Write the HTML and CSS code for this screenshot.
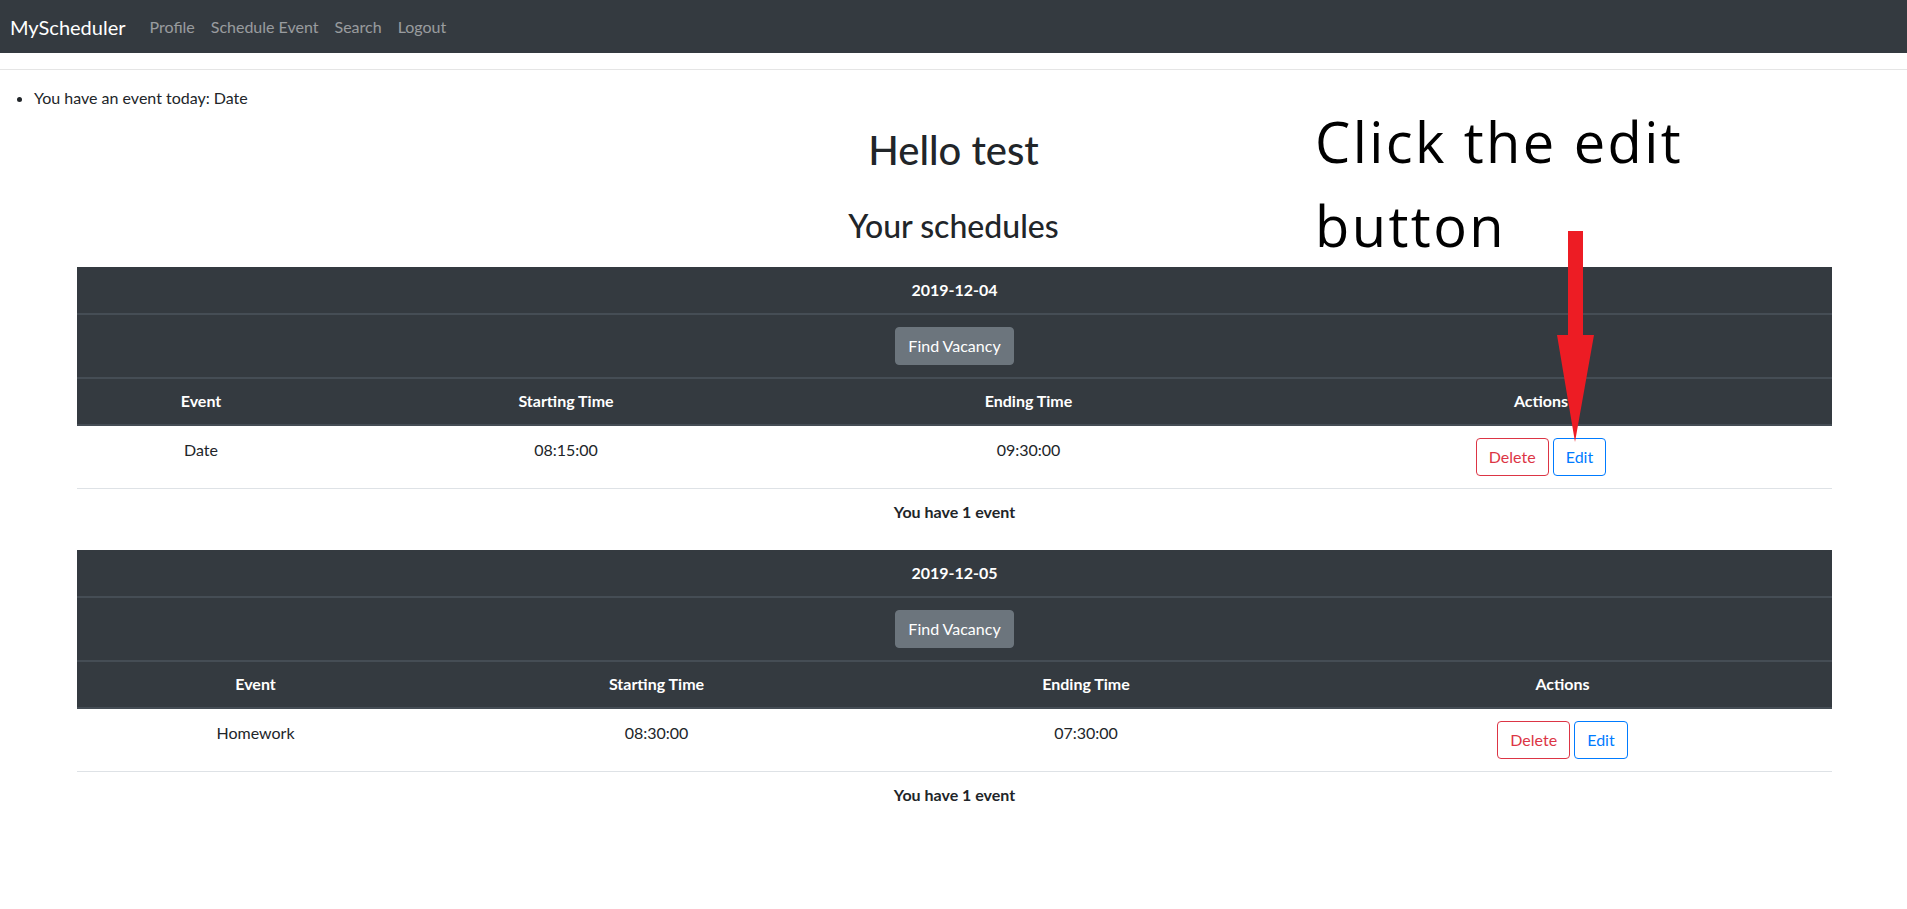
FILE: index.html
```html
<!DOCTYPE html>
<html>
<head>
<meta charset="utf-8">
<title>MyScheduler</title>
<link rel="stylesheet" href="styles.css">
</head>
<body>
<nav class="navbar">
  <a class="brand" href="#">MyScheduler</a>
  <a class="nav-link" href="#">Profile</a>
  <a class="nav-link" href="#">Schedule Event</a>
  <a class="nav-link" href="#">Search</a>
  <a class="nav-link" href="#">Logout</a>
</nav>
<hr class="rule">
<ul class="notices">
  <li>You have an event today: Date</li>
</ul>
<h1 class="hello">Hello test</h1>
<h2 class="subtitle">Your schedules</h2>

<table class="sched t1">
  <colgroup><col class="c1"><col class="c2"><col class="c3"><col class="c4"></colgroup>
  <thead>
    <tr><th colspan="4" class="date">2019-12-04</th></tr>
    <tr><th colspan="4" class="vac"><button class="btn btn-secondary">Find Vacancy</button></th></tr>
    <tr class="cols"><th>Event</th><th>Starting Time</th><th>Ending Time</th><th>Actions</th></tr>
  </thead>
  <tbody>
    <tr class="data"><td>Date</td><td>08:15:00</td><td>09:30:00</td><td><button class="btn btn-danger-o">Delete</button> <button class="btn btn-primary-o">Edit</button></td></tr>
    <tr class="count"><td colspan="4">You have 1 event</td></tr>
  </tbody>
</table>

<table class="sched t2">
  <colgroup><col class="c1"><col class="c2"><col class="c3"><col class="c4"></colgroup>
  <thead>
    <tr><th colspan="4" class="date">2019-12-05</th></tr>
    <tr><th colspan="4" class="vac"><button class="btn btn-secondary">Find Vacancy</button></th></tr>
    <tr class="cols"><th>Event</th><th>Starting Time</th><th>Ending Time</th><th>Actions</th></tr>
  </thead>
  <tbody>
    <tr class="data"><td>Homework</td><td>08:30:00</td><td>07:30:00</td><td><button class="btn btn-danger-o">Delete</button> <button class="btn btn-primary-o">Edit</button></td></tr>
    <tr class="count"><td colspan="4">You have 1 event</td></tr>
  </tbody>
</table>

<div class="annotation">Click the edit<br>button</div>
<svg class="arrow" width="40" height="215" viewBox="0 0 40 215">
  <polygon points="13,2 28,2 28,106 39,106 20,213 2,106 13,106" fill="#ed1c24"/>
</svg>
</body>
</html>
```

FILE: styles.css
```css
html, body {
  margin: 0;
  padding: 0;
}
body {
  font-family: Lato, "Open Sans", sans-serif;
  font-size: 16px;
  line-height: 24px;
  color: #212529;
  background: #fff;
  position: relative;
}
.navbar {
  display: flex;
  align-items: center;
  height: 53px;
  background: #343a40;
  padding: 0 0 0 10px;
}
.brand {
  color: #fff;
  font-size: 20px;
  line-height: 30px;
  text-decoration: none;
  margin-right: 16px;
}
.nav-link {
  color: rgba(255, 255, 255, 0.5);
  text-decoration: none;
  padding: 0 8px;
}
.rule {
  margin: 16px 0 16px 0;
  border: 0;
  border-top: 1px solid rgba(0, 0, 0, 0.1);
  height: 0;
}
.notices {
  margin: 0;
  padding-left: 34px;
}
.hello {
  text-align: center;
  font-size: 40px;
  font-weight: 500;
  line-height: 48px;
  margin: 16px 0 0 0;
}
.subtitle {
  text-align: center;
  font-size: 32px;
  font-weight: 500;
  line-height: 38px;
  margin: 33px 0 0 0;
}
.sched {
  border-collapse: collapse;
  table-layout: fixed;
  width: 1755px;
  margin: 0 0 15px 77px;
  text-align: center;
}
.t1 { margin-top: 22px; }
.t1 .c1 { width: 248px; }
.t1 .c2 { width: 482px; }
.t1 .c3 { width: 443px; }
.t1 .c4 { width: 582px; }
.t2 .c1 { width: 357px; }
.t2 .c2 { width: 445px; }
.t2 .c3 { width: 414px; }
.t2 .c4 { width: 539px; }
.sched th {
  background: #343a40;
  color: #fff;
  font-weight: 700;
  border-bottom: 2px solid #454d55;
  padding: 11px 12px;
}
.sched th.vac {
  padding: 12px 12px;
}
.sched .cols th {
  padding: 10px 12px 11px;
}
.sched td {
  vertical-align: top;
  padding: 12px 12px;
}
.sched .count td {
  border-top: 1px solid #dee2e6;
  padding: 11px 12px;
  font-weight: 700;
}
.data td {
  line-height: 24px;
}
.btn {
  font-family: inherit;
  font-size: 16px;
  line-height: 24px;
  padding: 6px 12px;
  border-radius: 4px;
  border: 1px solid transparent;
  background: transparent;
  cursor: pointer;
}
.btn-secondary {
  background: #6c757d;
  border-color: #6c757d;
  color: #fff;
}
.btn-danger-o {
  color: #dc3545;
  border-color: #dc3545;
}
.btn-primary-o {
  color: #007bff;
  border-color: #007bff;
}
.annotation {
  position: absolute;
  left: 1315px;
  top: 99px;
  font-family: "Open Sans", Lato, sans-serif;
  font-size: 56px;
  line-height: 84px;
  letter-spacing: 2.4px;
  color: #000;
}
.arrow {
  position: absolute;
  left: 1555px;
  top: 229px;
}
```
